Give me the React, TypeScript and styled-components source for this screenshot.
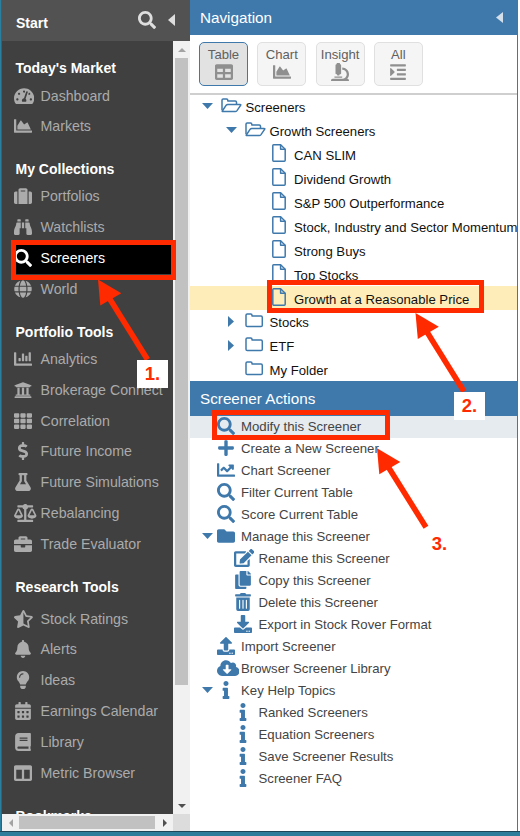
import React from 'react';
import styled, { createGlobalStyle, css } from 'styled-components';
import type { IconType } from 'react-icons';
import {
  FaTachometerAlt, FaChartArea, FaSuitcase, FaBinoculars, FaSearch, FaGlobe, FaChartBar, FaUniversity,
  FaTh, FaDollarSign, FaFlask, FaBalanceScale, FaBriefcase, FaStarHalfAlt, FaBell, FaLightbulb,
  FaCalendarAlt, FaBook, FaColumns, FaTable, FaMicroscope, FaIndent, FaPlus, FaChartLine, FaFolder,
  FaEdit, FaCopy, FaTrashAlt, FaDownload, FaUpload, FaCloudDownloadAlt, FaInfo,
} from 'react-icons/fa';

const BLUE = '#3f79ac';
const RED = '#ff2a00';

const GlobalStyle = createGlobalStyle`
  * { box-sizing: border-box; }
  body {
    margin: 0;
    background: #fff;
    font-family: "Liberation Sans", Arial, sans-serif;
  }
`;

const Page = styled.div`
  position: relative;
  width: 520px;
  height: 836px;
  overflow: hidden;
  display: flex;
  flex-direction: column;
`;

const Columns = styled.div`
  display: flex;
  height: 831px;
  border-left: 1px solid #2a7f9f;
`;

const BottomStrip = styled.div`
  height: 5px;
  background: #2e7d9b;
  border-top: 1px solid #1d4659;
`;

/* ---------- sidebar ---------- */

const Sidebar = styled.aside`
  display: flex;
  flex-direction: column;
  width: 189px;
  flex: none;
  background: #404040;
  border-left: 1px solid #3c5f6c;
`;

const SidebarHeader = styled.header`
  display: flex;
  align-items: center;
  height: 41px;
  flex: none;
  padding: 5px 15px 0 14px;
  background: #525252;
  color: #fff;
  font-size: 14px;
  font-weight: bold;
`;

const HeaderTools = styled.div`
  display: flex;
  align-items: center;
  gap: 12px;
  margin-left: auto;
  margin-top: -7px;
  color: #dedede;
`;

const SidebarBody = styled.div`
  display: grid;
  grid-template-columns: 171px 17px;
  grid-template-rows: 773px 17px;
`;

const Menu = styled.nav`
  height: 773px;
  overflow: hidden;
`;

const MenuSection = styled.section<{ $extra?: number }>`
  margin-top: -0.2px;
  h2 {
    display: flex;
    align-items: center;
    height: 39.4px;
    margin: 0 0 ${p => p.$extra ?? 0}px;
    padding: 15.8px 0 0 13.5px;
    color: #fff;
    font-size: 14px;
    font-weight: bold;
    white-space: nowrap;
  }
`;

const MenuItem = styled.div<{ $active?: boolean }>`
  display: flex;
  align-items: center;
  height: 30.83px;
  margin-left: 11px;
  color: ${p => (p.$active ? '#fff' : '#ababab')};
  background: ${p => (p.$active ? '#000' : 'transparent')};
  font-size: 14.2px;
  white-space: nowrap;
`;

/* The slot keeps a fixed advance so wide glyphs do not move the label. */
const IconSlot = styled.span<{ $width: number }>`
  display: flex;
  flex: none;
  width: ${p => p.$width}px;
`;

const Glyph = styled.span<{ $width?: number; $color?: string; $indent?: number }>`
  display: flex;
  flex: none;
  margin-left: ${p => p.$indent ?? 0}px;
  color: ${p => p.$color ?? 'inherit'};
  svg { flex: none; width: ${p => p.$width ?? 18}px; height: 18px; }
`;

const VScroll = styled.div`
  display: flex;
  flex-direction: column;
  align-items: center;
  background: #f1f1f1;
  span { display: flex; align-items: center; height: 17px; }
  i { width: 13px; height: 627px; background: #c1c1c1; margin-bottom: auto; }
`;

const HScroll = styled.div`
  display: flex;
  align-items: center;
  background: #f1f1f1;
  span { display: flex; align-items: center; justify-content: center; width: 17px; }
  i { width: 136px; height: 13px; background: #c1c1c1; margin-right: auto; }
`;

const ScrollCorner = styled.div`
  background: #dcdcdc;
`;

type Dir = 'up' | 'down' | 'left' | 'right';

const trianglePoints: Record<Dir, string> = {
  up: '0,10 5,0 10,10',
  down: '0,0 10,0 5,10',
  left: '10,0 10,10 0,5',
  right: '0,0 10,5 0,10',
};

const Triangle = ({ dir, w, h, color }: { dir: Dir; w: number; h: number; color: string }) => (
  <svg width={w} height={h} viewBox="0 0 10 10" preserveAspectRatio="none">
    <polygon points={trianglePoints[dir]} fill={color} />
  </svg>
);

type Entry = { label: string; icon: IconType; active?: boolean; iconWidth?: number };

const sections: { title: string; extra?: number; items: Entry[] }[] = [
  {
    title: "Today's Market",
    items: [
      { label: 'Dashboard', icon: FaTachometerAlt, iconWidth: 20.25 },
      { label: 'Markets', icon: FaChartArea },
    ],
  },
  {
    title: 'My Collections',
    items: [
      { label: 'Portfolios', icon: FaSuitcase },
      { label: 'Watchlists', icon: FaBinoculars },
      { label: 'Screeners', icon: FaSearch, active: true },
      { label: 'World', icon: FaGlobe },
    ],
  },
  {
    title: 'Portfolio Tools',
    items: [
      { label: 'Analytics', icon: FaChartBar },
      { label: 'Brokerage Connect', icon: FaUniversity },
      { label: 'Correlation', icon: FaTh },
      { label: 'Future Income', icon: FaDollarSign },
      { label: 'Future Simulations', icon: FaFlask },
      { label: 'Rebalancing', icon: FaBalanceScale, iconWidth: 22.5 },
      { label: 'Trade Evaluator', icon: FaBriefcase },
    ],
  },
  {
    title: 'Research Tools',
    extra: 4.6,
    items: [
      { label: 'Stock Ratings', icon: FaStarHalfAlt, iconWidth: 18.85 },
      { label: 'Alerts', icon: FaBell },
      { label: 'Ideas', icon: FaLightbulb },
      { label: 'Earnings Calendar', icon: FaCalendarAlt },
      { label: 'Library', icon: FaBook },
      { label: 'Metric Browser', icon: FaColumns },
    ],
  },
  { title: 'Bookmarks', items: [] },
];

/* ---------- navigation panel ---------- */

const Panel = styled.main`
  display: flex;
  flex-direction: column;
  width: 328px;
  flex: none;
  overflow: hidden;
  background: #fff;
  border-right: 1px solid ${BLUE};
`;

const PanelTitle = styled.header`
  display: flex;
  align-items: center;
  justify-content: space-between;
  height: 35px;
  flex: none;
  padding: 0 14px 1px 10px;
  background: ${BLUE};
  color: #fff;
  font-size: 15.25px;
`;

const Toolbar = styled.div`
  display: flex;
  gap: 9.3px;
  height: 60px;
  flex: none;
  padding: 7px 0 0 9px;
  border-bottom: 2px solid #cfcfcf;
`;

const ViewButton = styled.button<{ $selected?: boolean }>`
  display: flex;
  flex-direction: column;
  align-items: center;
  width: 49px;
  height: 44px;
  padding: 4px 0 0;
  border: 1px solid ${p => (p.$selected ? BLUE : '#e0e0e0')};
  border-radius: 5px;
  background: ${p => (p.$selected ? '#e2e2e2' : '#f5f5f5')};
  color: #606060;
  font: 13.1px/16px "Liberation Sans", Arial, sans-serif;
  svg { color: #8f8f8f; }
`;

const Tree = styled.div`
  height: 286px;
  flex: none;
  overflow: hidden;
`;

const TreeRow = styled.div<{ $level: number; $selected?: boolean; $raised?: boolean }>`
  display: flex;
  align-items: center;
  height: 24px;
  padding-left: ${p => [12, 36, 60][p.$level]}px;
  padding-top: ${p => (p.$raised ? 0 : 2)}px;
  background: ${p => (p.$selected ? '#ffedb9' : 'transparent')};
  color: #111;
  font-size: 13.15px;
  white-space: nowrap;
  &:first-child { height: 23px; padding-top: 1px; }
`;

const TreeCaret = styled.span<{ $collapsed?: boolean }>`
  display: flex;
  align-items: center;
  width: 19px;
  flex: none;
  margin-top: -2px;
  padding-left: ${p => (p.$collapsed ? 2 : 0)}px;
`;

const TreeIcon = styled.span<{ $file?: boolean }>`
  display: flex;
  flex: none;
  width: ${p => (p.$file ? 25 : 24.5)}px;
  margin-top: -4px;
  ${p => p.$file && css`padding-left: 2.5px;`}
`;

const outline = { fill: 'none', stroke: BLUE, strokeWidth: 1.5, strokeLinejoin: 'round' as const };

const OpenFolder = () => (
  <svg width="21" height="15" viewBox="0 0 21 15" {...outline}>
    <path d="M1 12.2V2.2Q1 1 2.2 1H5.6Q6.8 1 6.8 2.2V3H14.2Q15.5 3 15.5 4.3V6.3" />
    <path d="M1.3 13 5.2 7.2Q5.8 6.4 6.8 6.4H19Q20.3 6.4 19.6 7.4L16 12.6Q15.3 13.5 14.2 13.5H2Q.9 13.5 1.3 13Z" />
  </svg>
);

const ClosedFolder = () => (
  <svg width="19" height="15" viewBox="0 0 19 15" {...outline}>
    <path d="M1 2.3Q1 1 2.3 1H5.8Q7 1 7 2.3V3.1H16Q17.3 3.1 17.3 4.4V12.2Q17.3 13.5 16 13.5H2.3Q1 13.5 1 12.2Z" />
  </svg>
);

const FileSheet = () => (
  <svg width="14" height="18" viewBox="0 0 14 18" {...outline}>
    <path d="M1.6.8H8.6L13.2 5.3V16.3Q13.2 17.2 12.3 17.2H1.6Q.8 17.2.8 16.3V1.6Q.8.8 1.6.8Z" />
    <path d="M8.6.8V5.3H13.2" />
  </svg>
);

type Node = {
  label: string;
  level: number;
  kind: 'open' | 'closed' | 'file';
  caret?: Dir;
  selected?: boolean;
  raised?: boolean;
};

const nodes: Node[] = [
  { label: 'Screeners', level: 0, kind: 'open', caret: 'down' },
  { label: 'Growth Screeners', level: 1, kind: 'open', caret: 'down' },
  { label: 'CAN SLIM', level: 2, kind: 'file' },
  { label: 'Dividend Growth', level: 2, kind: 'file' },
  { label: 'S&P 500 Outperformance', level: 2, kind: 'file' },
  { label: 'Stock, Industry and Sector Momentum', level: 2, kind: 'file' },
  { label: 'Strong Buys', level: 2, kind: 'file' },
  { label: 'Top Stocks', level: 2, kind: 'file' },
  { label: 'Growth at a Reasonable Price', level: 2, kind: 'file', selected: true },
  { label: 'Stocks', level: 1, kind: 'closed', caret: 'right', raised: true },
  { label: 'ETF', level: 1, kind: 'closed', caret: 'right', raised: true },
  { label: 'My Folder', level: 1, kind: 'closed', raised: true },
];

const ActionRow = styled.div<{ $nested?: boolean; $highlight?: boolean }>`
  display: flex;
  align-items: center;
  height: 22px;
  flex: none;
  padding: 0 0 2px ${p => (p.$nested ? 29.5 : 12)}px;
  background: ${p => (p.$highlight ? '#e6ebef' : 'transparent')};
  color: #444;
  font-size: 13.2px;
  white-space: nowrap;
`;

const ActionCaret = styled.span`
  display: flex;
  width: 14.5px;
  flex: none;
`;

type Action = {
  label: string;
  icon: IconType;
  iconWidth?: number;
  nested?: boolean;
  highlight?: boolean;
  caret?: boolean;
};

const actions: Action[] = [
  { label: 'Modify this Screener', icon: FaSearch, highlight: true },
  { label: 'Create a New Screener', icon: FaPlus },
  { label: 'Chart Screener', icon: FaChartLine },
  { label: 'Filter Current Table', icon: FaSearch },
  { label: 'Score Current Table', icon: FaSearch },
  { label: 'Manage this Screener', icon: FaFolder, caret: true },
  { label: 'Rename this Screener', icon: FaEdit, iconWidth: 20.25, nested: true },
  { label: 'Copy this Screener', icon: FaCopy, nested: true },
  { label: 'Delete this Screener', icon: FaTrashAlt, nested: true },
  { label: 'Export in Stock Rover Format', icon: FaDownload, nested: true },
  { label: 'Import Screener', icon: FaUpload },
  { label: 'Browser Screener Library', icon: FaCloudDownloadAlt, iconWidth: 22.5 },
  { label: 'Key Help Topics', icon: FaInfo, caret: true },
  { label: 'Ranked Screeners', icon: FaInfo, nested: true },
  { label: 'Equation Screeners', icon: FaInfo, nested: true },
  { label: 'Save Screener Results', icon: FaInfo, nested: true },
  { label: 'Screener FAQ', icon: FaInfo, nested: true },
];

const views: { label: string; icon: IconType; selected?: boolean }[] = [
  { label: 'Table', icon: FaTable, selected: true },
  { label: 'Chart', icon: FaChartArea },
  { label: 'Insight', icon: FaMicroscope },
  { label: 'All', icon: FaIndent },
];

/* ---------- callouts drawn over the page ---------- */

const Highlight = styled.div<{ $x: number; $y: number; $w: number; $h: number }>`
  position: absolute;
  left: ${p => p.$x}px;
  top: ${p => p.$y}px;
  width: ${p => p.$w}px;
  height: ${p => p.$h}px;
  border: 5px solid ${RED};
`;

const StepLabel = styled.div<{ $x: number; $y: number; $boxed?: boolean }>`
  position: absolute;
  left: ${p => p.$x}px;
  top: ${p => p.$y}px;
  width: 31px;
  height: 28px;
  display: flex;
  align-items: center;
  justify-content: center;
  background: ${p => (p.$boxed ? '#fff' : 'transparent')};
  color: ${RED};
  font-size: 18.5px;
  font-weight: bold;
`;

const ArrowLayer = styled.svg`
  position: absolute;
  left: 0;
  top: 0;
  pointer-events: none;
`;

const Arrow = ({ x, y, dx, dy }: { x: number; y: number; dx: number; dy: number }) => (
  <g fill={RED} stroke={RED}>
    <line x1={x + 9} y1={y + 15} x2={x + dx} y2={y + dy} strokeWidth="5.6" />
    <polygon points={`${x},${y} ${x + 23.3},${y + 13.8} ${x + 2.3},${y + 26}`} stroke="none" />
  </g>
);

export default function App() {
  return (
    <Page>
      <GlobalStyle />
      <Columns>
        <Sidebar>
          <SidebarHeader>
            Start
            <HeaderTools>
              <FaSearch size={18} />
              <Triangle dir="left" w={7} h={12} color="#dedede" />
            </HeaderTools>
          </SidebarHeader>
          <SidebarBody>
            <Menu>
              {sections.map(s => (
                <MenuSection key={s.title} $extra={s.extra}>
                  <h2>{s.title}</h2>
                  {s.items.map(({ label, icon: Icon, active, iconWidth }) => (
                    <MenuItem key={label} $active={active}>
                      <IconSlot $width={27.5}>
                        <Glyph $indent={1} $width={iconWidth}><Icon /></Glyph>
                      </IconSlot>
                      {label}
                    </MenuItem>
                  ))}
                </MenuSection>
              ))}
            </Menu>
            <VScroll>
              <span><Triangle dir="up" w={8} h={4} color="#a3a3a3" /></span>
              <i />
              <span><Triangle dir="down" w={8} h={4} color="#505050" /></span>
            </VScroll>
            <HScroll>
              <span><Triangle dir="left" w={4} h={8} color="#a3a3a3" /></span>
              <i />
              <span><Triangle dir="right" w={4} h={8} color="#505050" /></span>
            </HScroll>
            <ScrollCorner />
          </SidebarBody>
        </Sidebar>

        <Panel>
          <PanelTitle>
            Navigation
            <Triangle dir="left" w={7} h={11} color="#d3e0ec" />
          </PanelTitle>
          <Toolbar>
            {views.map(({ label, icon: Icon, selected }) => (
              <ViewButton key={label} $selected={selected}>
                {label}
                <Icon size={18} />
              </ViewButton>
            ))}
          </Toolbar>
          <Tree>
            {nodes.map(n => (
              <TreeRow key={n.label} $level={n.level} $selected={n.selected} $raised={n.raised}>
                <TreeCaret $collapsed={n.caret === 'right'}>
                  {n.caret === 'down' && <Triangle dir="down" w={11} h={6} color={BLUE} />}
                  {n.caret === 'right' && <Triangle dir="right" w={6} h={11} color={BLUE} />}
                </TreeCaret>
                <TreeIcon $file={n.kind === 'file'}>
                  {n.kind === 'open' && <OpenFolder />}
                  {n.kind === 'closed' && <ClosedFolder />}
                  {n.kind === 'file' && <FileSheet />}
                </TreeIcon>
                {n.label}
              </TreeRow>
            ))}
          </Tree>
          <PanelTitle>Screener Actions</PanelTitle>
          {actions.map(({ label, icon: Icon, iconWidth, nested, highlight, caret }) => (
            <ActionRow key={label} $nested={nested} $highlight={highlight}>
              <ActionCaret>{caret && <Triangle dir="down" w={11} h={6} color={BLUE} />}</ActionCaret>
              <IconSlot $width={24.5}>
                <Glyph $color={BLUE} $width={iconWidth}><Icon /></Glyph>
              </IconSlot>
              {label}
            </ActionRow>
          ))}
        </Panel>
      </Columns>
      <BottomStrip />

      <Highlight $x={10.5} $y={240} $w={165} $h={39.5} />
      <Highlight $x={266.7} $y={280.3} $w={217} $h={33.2} />
      <Highlight $x={211.7} $y={409.7} $w={178} $h={30.8} />
      <ArrowLayer width="520" height="836" viewBox="0 0 520 836">
        <Arrow x={98} y={279.5} dx={49.5} dy={80} />
        <Arrow x={415.5} y={313} dx={48.5} dy={78.5} />
        <Arrow x={377} y={448.3} dx={49} dy={79} />
      </ArrowLayer>
      <StepLabel $x={137} $y={360} $boxed>1.</StepLabel>
      <StepLabel $x={454} $y={391.5} $boxed>2.</StepLabel>
      <StepLabel $x={424} $y={530}>3.</StepLabel>
    </Page>
  );
}
